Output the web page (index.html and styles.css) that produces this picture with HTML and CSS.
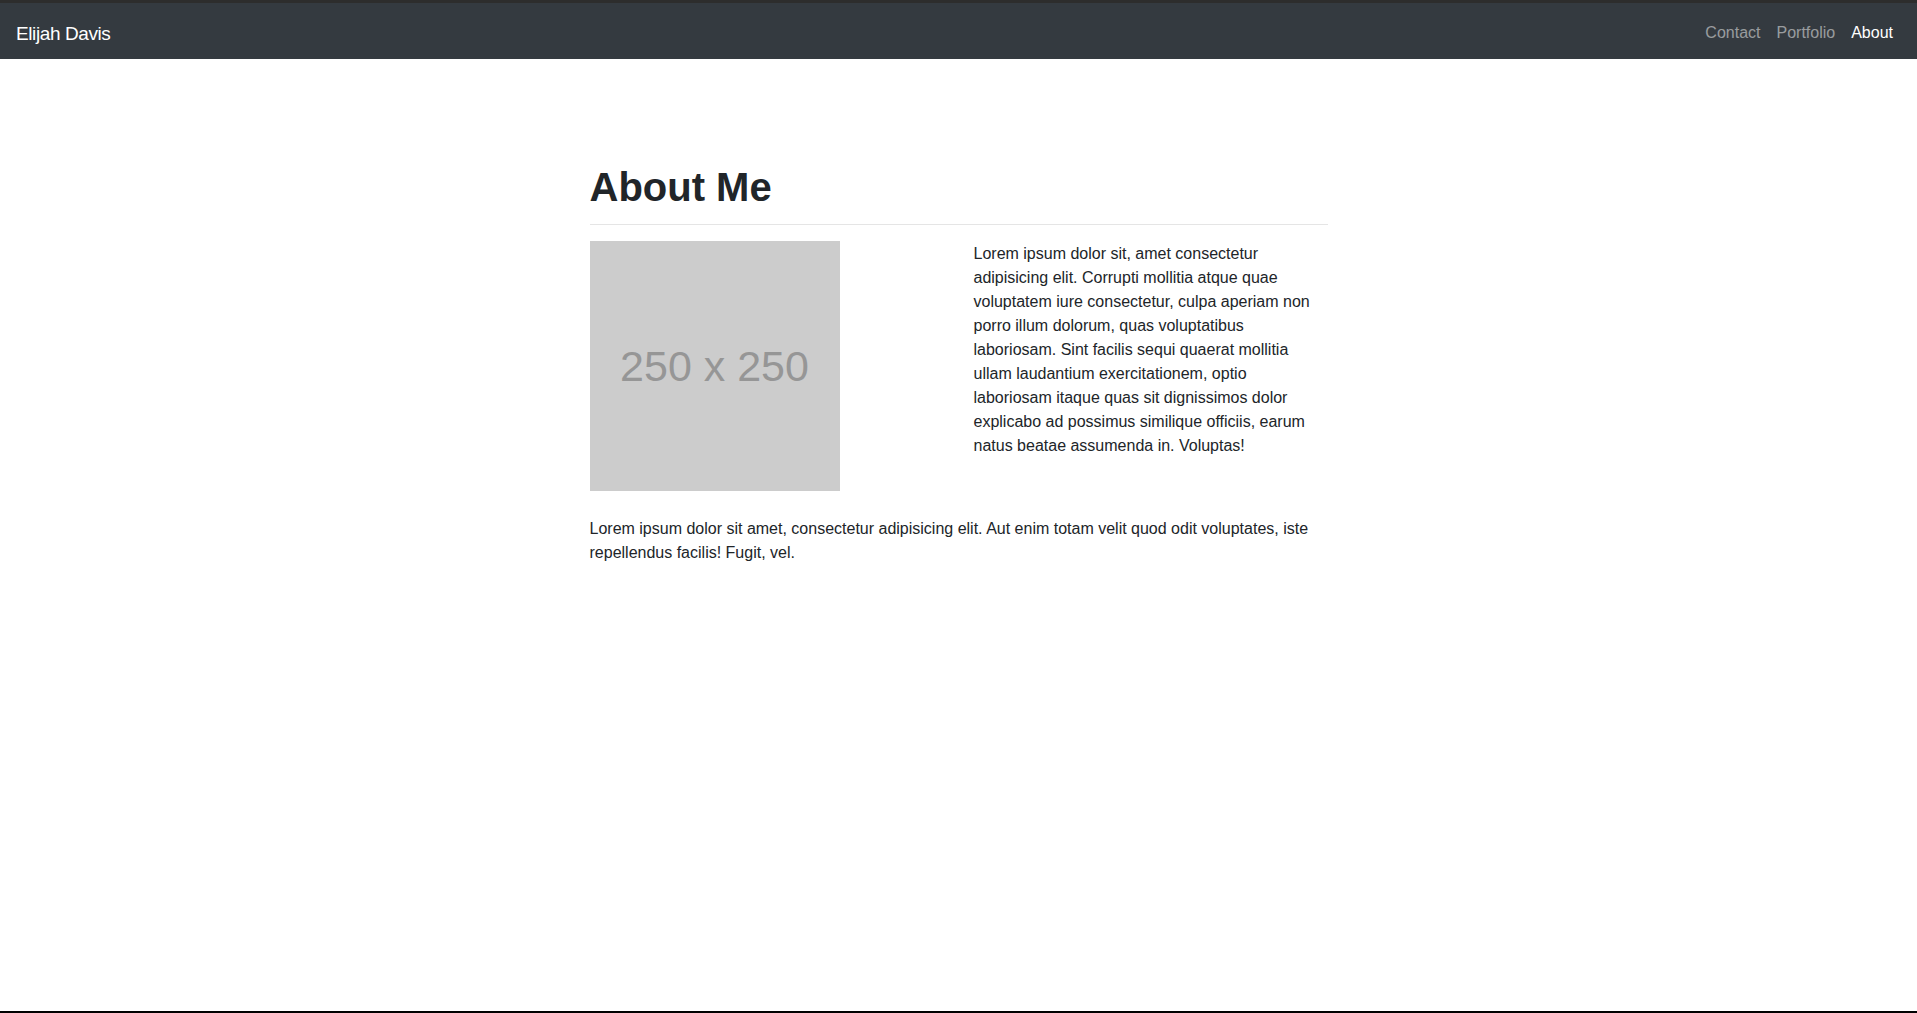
FILE: index.html
```html
<!DOCTYPE html>
<html lang="en">
<head>
<meta charset="utf-8">
<title>Elijah Davis - About</title>
<link rel="stylesheet" href="styles.css">
</head>
<body>
<div class="top-strip"></div>
<nav class="navbar">
  <a class="brand" href="#">Elijah Davis</a>
  <ul class="nav">
    <li><a class="nav-link" href="#">Contact</a></li>
    <li><a class="nav-link" href="#">Portfolio</a></li>
    <li><a class="nav-link active" href="#">About</a></li>
  </ul>
</nav>
<main class="container">
  <h1 class="title">About Me</h1>
  <hr class="divider">
  <div class="about-row">
    <div class="placeholder"><span>250 x 250</span></div>
    <p class="side-text">Lorem ipsum dolor sit, amet consectetur adipisicing elit. Corrupti mollitia atque quae voluptatem iure consectetur, culpa aperiam non porro illum dolorum, quas voluptatibus laboriosam. Sint facilis sequi quaerat mollitia ullam laudantium exercitationem, optio laboriosam itaque quas sit dignissimos dolor explicabo ad possimus similique officiis, earum natus beatae assumenda in. Voluptas!</p>
  </div>
  <p class="lower-text">Lorem ipsum dolor sit amet, consectetur adipisicing elit. Aut enim totam velit quod odit voluptates, iste repellendus facilis! Fugit, vel.</p>
</main>
<div class="bottom-line"></div>
</body>
</html>
```

FILE: styles.css
```css
* { box-sizing: border-box; }

html, body { height: 100%; }

body {
  margin: 0;
  min-height: 100vh;
  display: flex;
  flex-direction: column;
  font-family: "Liberation Sans", Arial, sans-serif;
  font-size: 16px;
  line-height: 24px;
  color: #212529;
  background: #ffffff;
}

.top-strip {
  height: 3px;
  background: #2d2d2d;
  flex: none;
}

.navbar {
  flex: none;
  height: 56px;
  background: #343a40;
  padding: 8px 16px;
  display: flex;
  justify-content: space-between;
  align-items: flex-start;
}

.brand {
  display: block;
  padding: 8px 0 2px;
  font-size: 19px;
  letter-spacing: -0.4px;
  line-height: 30px;
  color: #ffffff;
  text-decoration: none;
}

.nav {
  list-style: none;
  margin: 0;
  padding: 0;
  display: flex;
}

.nav-link {
  display: block;
  padding: 10px 8px 6px;
  line-height: 24px;
  color: rgba(255, 255, 255, 0.5);
  text-decoration: none;
}

.nav-link.active { color: #ffffff; }

.container {
  width: 738px;
  margin: 0 auto;
  padding-top: 104px;
  flex: 1 0 auto;
}

.title {
  margin: 0;
  font-size: 40px;
  line-height: 48px;
  font-weight: 700;
  color: #212529;
}

.divider {
  margin: 13px 0 16px;
  border: 0;
  border-top: 1px solid rgba(0, 0, 0, 0.1);
  height: 0;
}

.about-row {
  display: grid;
  grid-template-columns: 1fr 1fr;
  column-gap: 30px;
  align-items: start;
}

.placeholder {
  width: 250px;
  height: 250px;
  background: #cccccc;
  display: flex;
  align-items: center;
  justify-content: center;
}

.placeholder span {
  font-family: "Liberation Sans", Arial, sans-serif;
  font-size: 43px;
  line-height: 1;
  color: #969696;
}

.side-text {
  margin: 0;
  padding-top: 1px;
}

.lower-text {
  margin: 26px 0 0;
}

.bottom-line {
  flex: none;
  height: 2px;
  background: #000000;
}
```
